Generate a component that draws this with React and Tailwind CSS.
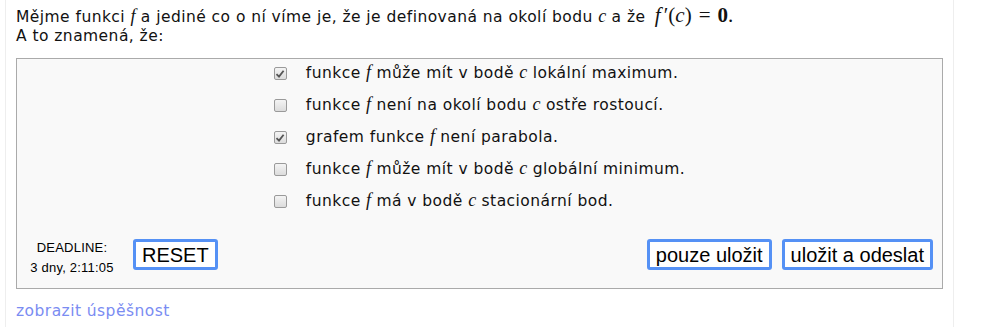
import React from "react";

const M = ({ children }) => (
  <span className="italic text-[18px] leading-none tracking-normal [font-family:'Liberation_Serif','DejaVu_Serif',serif]">{children}</span>
);

function Box({ checked }) {
  return (
    <span className="inline-flex items-center justify-center w-[13px] h-[13px] rounded-[2px] border border-[#9a9a9a] bg-gradient-to-b from-[#f4f4f4] to-[#dcdcdc]">
      {checked && (
        <svg width="10" height="10" viewBox="0 0 10 10">
          <path d="M1.5 5.2 L4 7.6 L8.6 1.8" fill="none" stroke="#555" strokeWidth="1.8" />
        </svg>
      )}
    </span>
  );
}

const options = [
  { checked: true, content: <>funkce <M>f</M> může mít v bodě <M>c</M> lokální maximum.</> },
  { checked: false, content: <>funkce <M>f</M> není na okolí bodu <M>c</M> ostře rostoucí.</> },
  { checked: true, content: <>grafem funkce <M>f</M> není parabola.</> },
  { checked: false, content: <>funkce <M>f</M> může mít v bodě <M>c</M> globální minimum.</> },
  { checked: false, content: <>funkce <M>f</M> má v bodě <M>c</M> stacionární bod.</> },
];

const Btn = ({ children }) => (
  <button className="h-[31px] px-[6px] bg-white border-[3px] border-[#5591f5] rounded-[3px] text-[20px] leading-none text-black tracking-normal [font-family:'Liberation_Sans',Arial,sans-serif]">
    {children}
  </button>
);

export default function App() {
  return (
    <div className="min-h-[327px] bg-white [font-family:'DejaVu_Sans',Verdana,sans-serif] text-[15.5px] tracking-[0.45px] text-[#111]">
      <div className="ml-[5px] w-[949px] min-h-[327px] border-l border-r border-[#eeeeee] px-[10px] pt-[5px]">
        <div className="leading-[21px]">
          <div className="h-[21px] whitespace-nowrap">
            Mějme funkci <M>f</M> a jediné co o ní víme je, že je definovaná na okolí bodu <M>c</M> a že{" "}
            <span className="ml-[4px] text-[21px] leading-none tracking-normal [font-family:'Liberation_Serif','DejaVu_Serif',serif]">
              <i>f</i><span className="ml-[3px]">′</span>(<i>c</i>)<span className="mx-[7px]">=</span><b>0</b>.
            </span>
          </div>
          <div>A to znamená, že:</div>
        </div>
        <div className="mt-[11px] border border-[#aaaaaa] bg-[#f9f9f9] pt-[4px] pb-[10px]">
          <div className="flex justify-center">
            <div className="flex flex-col gap-[11px]">
              {options.map((o, i) => (
                <div key={i} className="h-[21px] flex items-center">
                  <span className="mr-[19px] flex"><Box checked={o.checked} /></span>
                  <span className="leading-[21px] whitespace-nowrap">{o.content}</span>
                </div>
              ))}
            </div>
          </div>
          <div className="mt-[19px] flex items-center pl-[5px] pr-[9px]">
            <div className="w-[100px] pt-[7px] text-center text-[13px] tracking-[0.2px] leading-[20px] text-black [font-family:'Liberation_Sans',Arial,sans-serif]">
              <div>DEADLINE:</div>
              <div>3 dny, 2:11:05</div>
            </div>
            <div className="ml-[11px]"><Btn>RESET</Btn></div>
            <div className="ml-auto flex gap-[10px]">
              <Btn>pouze uložit</Btn>
              <Btn>uložit a odeslat</Btn>
            </div>
          </div>
        </div>
        <div className="mt-[12px] leading-[21px] text-[#7a8cf2]">zobrazit úspěšnost</div>
      </div>
    </div>
  );
}
